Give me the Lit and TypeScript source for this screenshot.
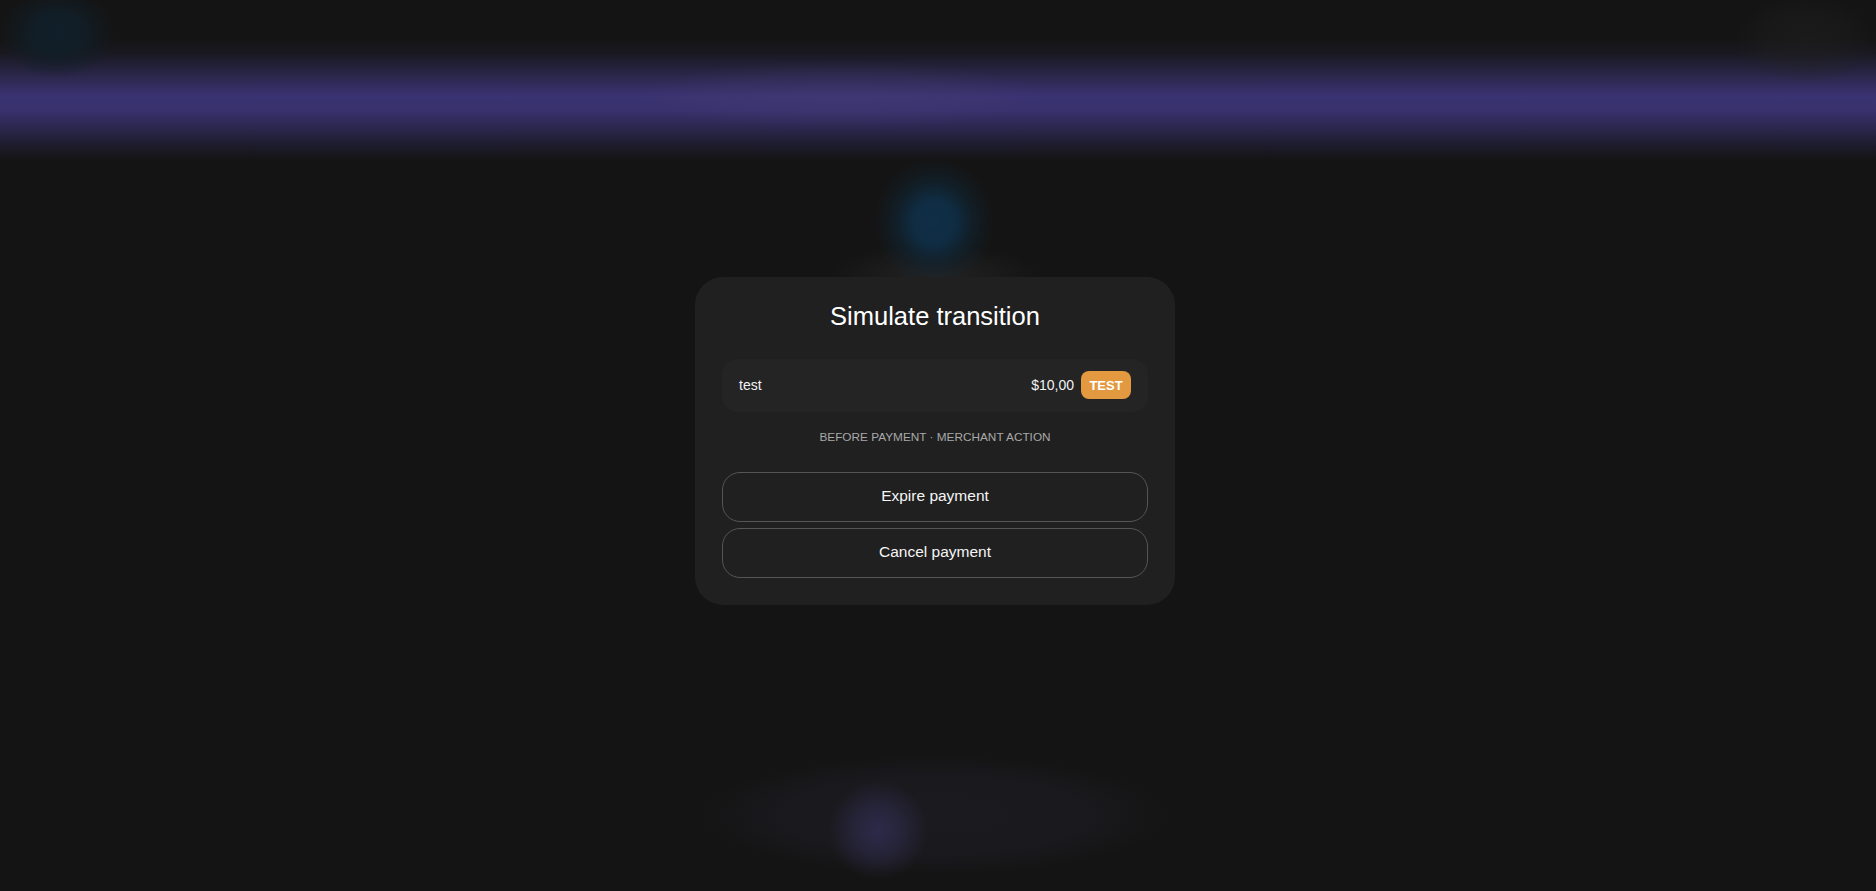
import { LitElement, html, css } from "lit";
import { customElement } from "lit/decorators.js";

@customElement("app-root")
export class AppRoot extends LitElement {
  static styles = css`
    :host {
      display: block;
      position: relative;
      width: 100%;
      height: 891px;
      overflow: hidden;
      background: #141414;
      font-family: "Liberation Sans", Arial, sans-serif;
      color: #fff;
    }
    .backdrop {
      position: absolute;
      inset: 0;
      overflow: hidden;
    }
    .backdrop div {
      position: absolute;
    }
    .band {
      left: 0;
      right: 0;
      top: 38px;
      height: 122px;
      background: linear-gradient(
        to bottom,
        #141414 0%,
        #191820 12%,
        #24223c 25%,
        #312c5c 38%,
        #3a3372 48%,
        #37316c 60%,
        #2c2852 72%,
        #1f1d30 86%,
        #141414 100%
      );
    }
    .band-light {
      left: 640px;
      top: 60px;
      width: 400px;
      height: 70px;
      background: radial-gradient(closest-side, rgba(80, 72, 125, 0.2), rgba(80, 72, 125, 0.12) 60%, rgba(80, 72, 125, 0));
    }
    .logo-blob {
      left: 0;
      top: -12px;
      width: 115px;
      height: 90px;
      background: radial-gradient(closest-side, #101f29, #111e27 40%, rgba(20, 20, 20, 0));
    }
    .top-right {
      left: 1735px;
      top: -5px;
      width: 141px;
      height: 90px;
      background: radial-gradient(closest-side, rgba(34, 34, 35, 0.45), rgba(34, 34, 35, 0.3) 60%, rgba(34, 34, 35, 0));
    }
    .haze {
      left: 830px;
      top: 245px;
      width: 210px;
      height: 60px;
      background: radial-gradient(closest-side, rgba(40, 40, 40, 0.75), rgba(40, 40, 40, 0));
    }
    .blue-blob {
      left: 874px;
      top: 158px;
      width: 120px;
      height: 128px;
      background: radial-gradient(closest-side, #0f2f48, #0f2c42 35%, rgba(16, 36, 50, 0.6) 65%, rgba(20, 20, 20, 0));
    }
    .foot {
      left: 700px;
      top: 755px;
      width: 470px;
      height: 120px;
      background: radial-gradient(closest-side, rgba(28, 27, 33, 0.9), rgba(28, 27, 33, 0.7) 65%, rgba(28, 27, 33, 0));
    }
    .foot-blob {
      left: 828px;
      top: 780px;
      width: 100px;
      height: 100px;
      background: radial-gradient(closest-side, #2d2a4a, rgba(45, 42, 72, 0.65) 45%, rgba(30, 29, 44, 0));
    }
    .page {
      position: relative;
      display: flex;
      justify-content: center;
      padding: 277px 6px 0 0;
    }
    .card {
      box-sizing: border-box;
      width: 480px;
      padding: 23px 27px 27px;
      background: #202020;
      border-radius: 28px;
    }
    h1 {
      margin: 0 0 27px;
      font-size: 25.5px;
      font-weight: 400;
      line-height: 32px;
      text-align: center;
      color: #fff;
    }
    .row {
      display: flex;
      align-items: center;
      height: 53px;
      padding: 0 17px 2px;
      box-sizing: border-box;
      background: #242424;
      border-radius: 16px;
      font-size: 14px;
      color: #f2f2f2;
    }
    .name {
      flex: 1;
    }
    .badge {
      display: flex;
      align-items: center;
      justify-content: center;
      width: 50px;
      height: 28px;
      margin: 1px 0 0 7px;
      box-sizing: border-box;
      border-radius: 8px;
      background: #e2993f;
      color: #fff;
      font-size: 13px;
      font-weight: 700;
    }
    .label {
      margin: 17px 0 27px;
      font-size: 11.8px;
      line-height: 16px;
      text-align: center;
      color: #a9a9a9;
    }
    .actions {
      display: flex;
      flex-direction: column;
      gap: 6px;
    }
    button {
      display: block;
      width: 100%;
      height: 50px;
      padding: 0 0 3px;
      background: transparent;
      border: 1px solid #555;
      border-radius: 18px;
      color: #f5f5f5;
      font: inherit;
      font-size: 15.5px;
    }
  `;

  render() {
    return html`
      <div class="backdrop">
        <div class="band"></div>
        <div class="band-light"></div>
        <div class="logo-blob"></div>
        <div class="top-right"></div>
        <div class="haze"></div>
        <div class="blue-blob"></div>
        <div class="foot"></div>
        <div class="foot-blob"></div>
      </div>
      <div class="page">
        <section class="card">
          <h1>Simulate transition</h1>
          <div class="row">
            <span class="name">test</span>
            <span>$10,00</span>
            <span class="badge">TEST</span>
          </div>
          <div class="label">BEFORE PAYMENT · MERCHANT ACTION</div>
          <div class="actions">
            <button>Expire payment</button>
            <button>Cancel payment</button>
          </div>
        </section>
      </div>
    `;
  }
}
